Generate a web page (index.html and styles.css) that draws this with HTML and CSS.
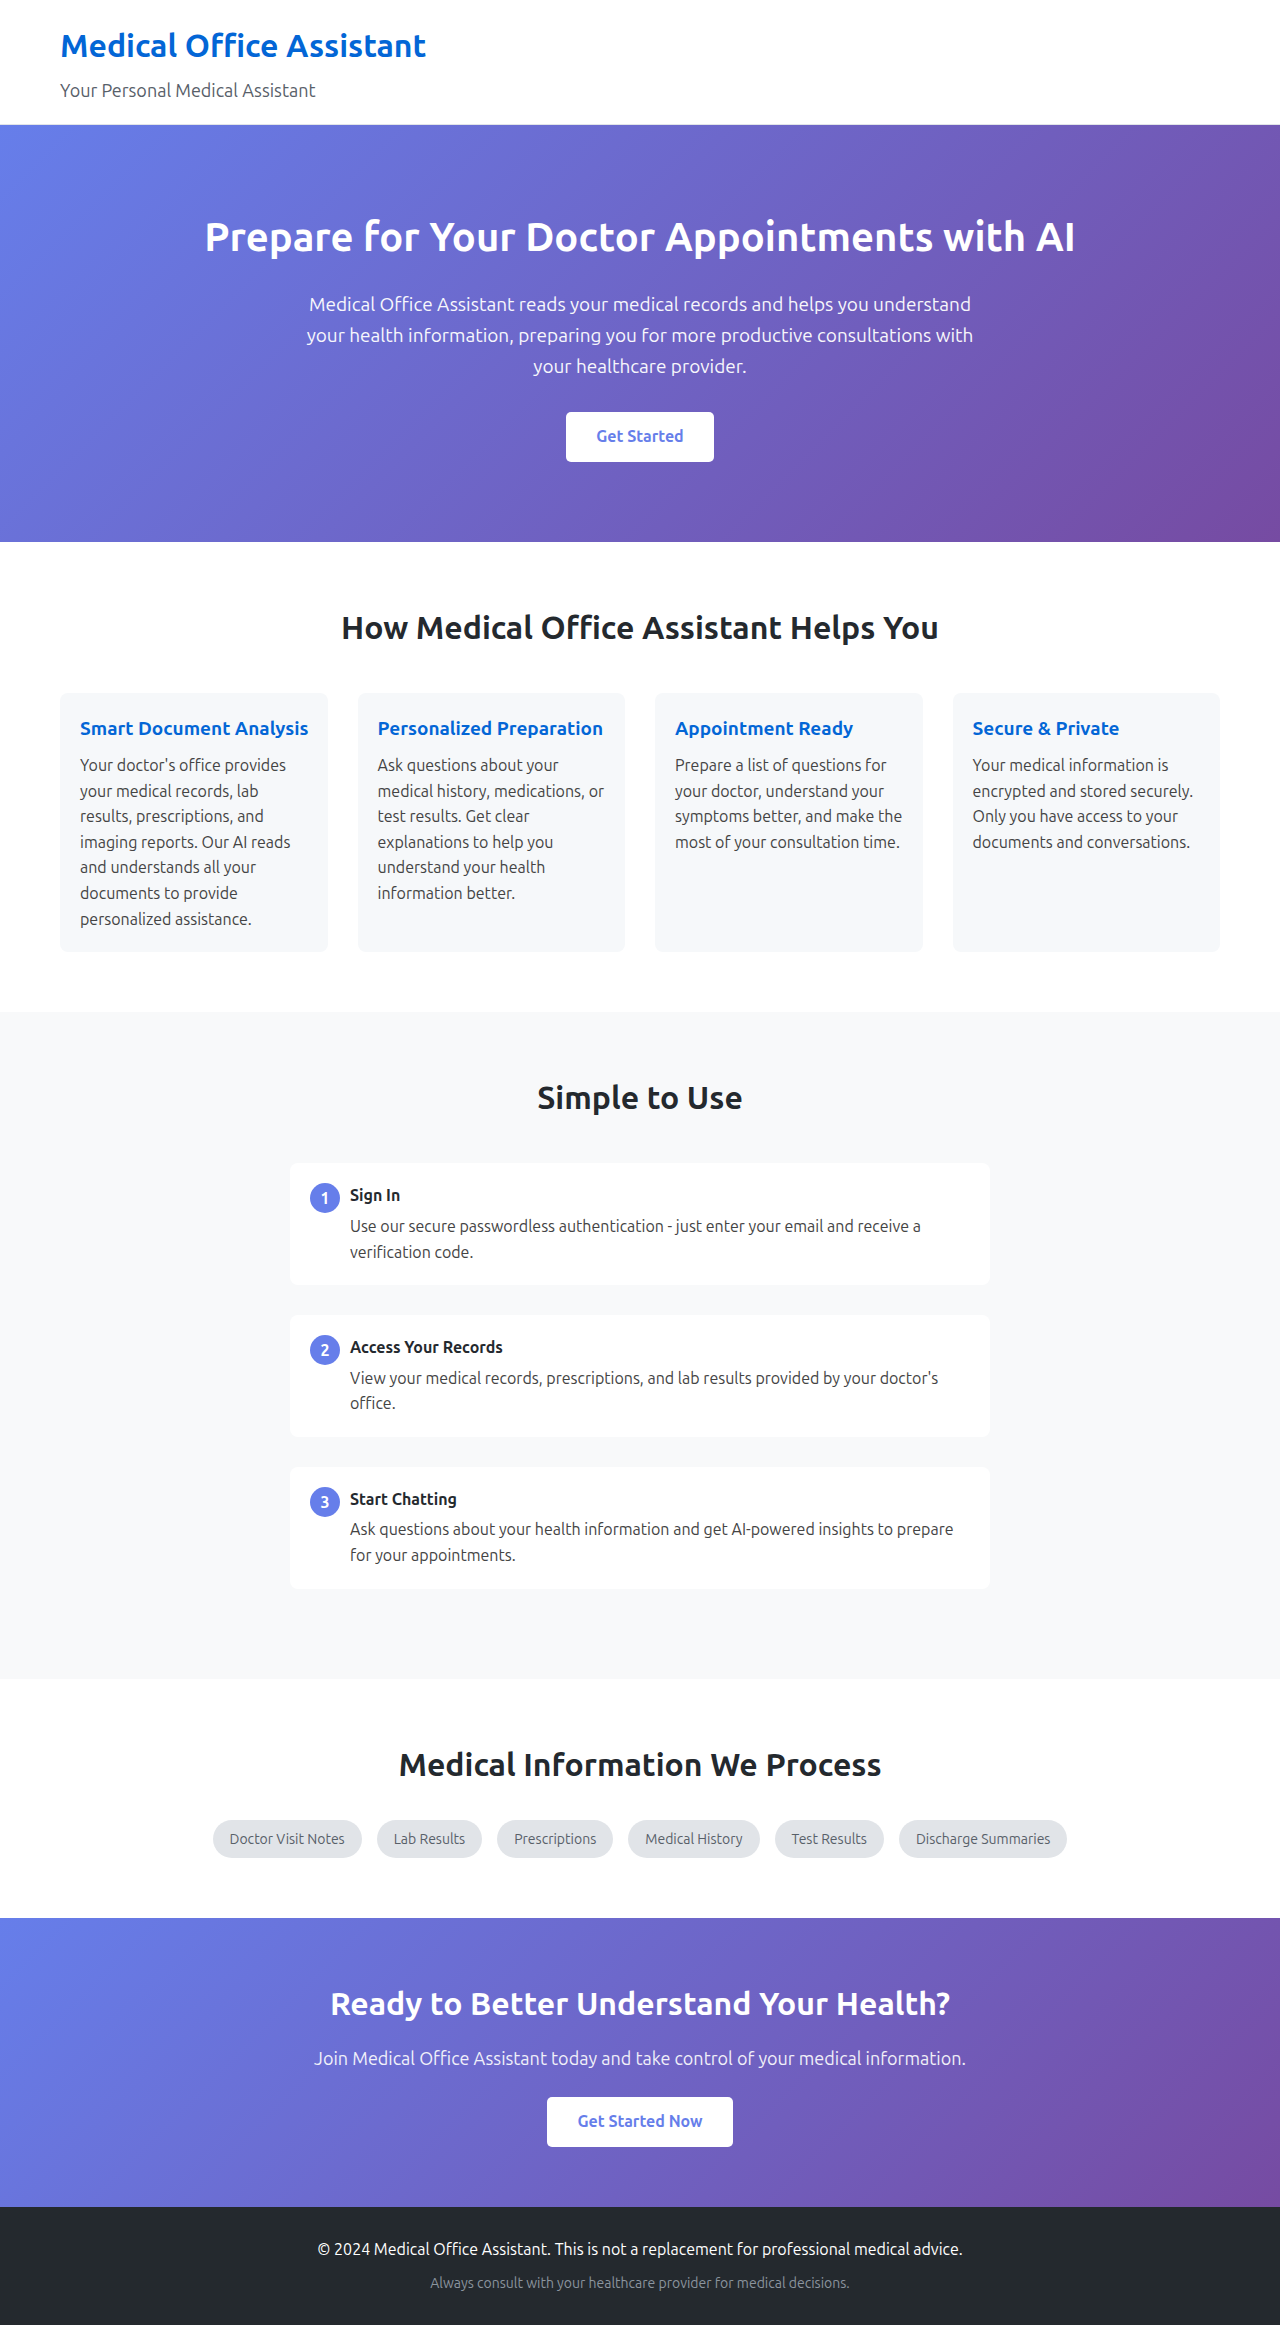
FILE: index.html
```html
<!DOCTYPE html>
<html lang="en">
<head>
  <meta charset="utf-8">
  <meta name="viewport" content="width=device-width, initial-scale=1">
  <title>Medical Office Assistant</title>
  <link rel="stylesheet" href="styles.css">
</head>
<body>
  <header class="site-header">
    <div class="container">
      <h1 class="brand">Medical Office Assistant</h1>
      <p class="tagline">Your Personal Medical Assistant</p>
    </div>
  </header>

  <main>
    <section class="hero">
      <div class="container">
        <h2 class="hero-title">Prepare for Your Doctor Appointments with AI</h2>
        <p class="hero-text">Medical Office Assistant reads your medical records and helps you understand your health information, preparing you for more productive consultations with your healthcare provider.</p>
        <a class="cta-button" href="#start">Get Started</a>
      </div>
    </section>

    <section class="section">
      <div class="container">
        <h2 class="section-title">How Medical Office Assistant Helps You</h2>
        <div class="feature-grid">
          <article class="feature">
            <h3 class="feature-title">Smart Document Analysis</h3>
            <p class="copy">Your doctor's office provides your medical records, lab results, prescriptions, and imaging reports. Our AI reads and understands all your documents to provide personalized assistance.</p>
          </article>
          <article class="feature">
            <h3 class="feature-title">Personalized Preparation</h3>
            <p class="copy">Ask questions about your medical history, medications, or test results. Get clear explanations to help you understand your health information better.</p>
          </article>
          <article class="feature">
            <h3 class="feature-title">Appointment Ready</h3>
            <p class="copy">Prepare a list of questions for your doctor, understand your symptoms better, and make the most of your consultation time.</p>
          </article>
          <article class="feature">
            <h3 class="feature-title">Secure &amp; Private</h3>
            <p class="copy">Your medical information is encrypted and stored securely. Only you have access to your documents and conversations.</p>
          </article>
        </div>
      </div>
    </section>

    <section class="section section-tinted">
      <div class="container">
        <h2 class="section-title">Simple to Use</h2>
        <ol class="steps">
          <li class="step">
            <span class="step-number">1</span>
            <div class="step-body">
              <h3 class="step-title">Sign In</h3>
              <p class="copy">Use our secure passwordless authentication - just enter your email and receive a verification code.</p>
            </div>
          </li>
          <li class="step">
            <span class="step-number">2</span>
            <div class="step-body">
              <h3 class="step-title">Access Your Records</h3>
              <p class="copy">View your medical records, prescriptions, and lab results provided by your doctor's office.</p>
            </div>
          </li>
          <li class="step">
            <span class="step-number">3</span>
            <div class="step-body">
              <h3 class="step-title">Start Chatting</h3>
              <p class="copy">Ask questions about your health information and get AI-powered insights to prepare for your appointments.</p>
            </div>
          </li>
        </ol>
      </div>
    </section>

    <section class="section">
      <div class="container">
        <h2 class="section-title section-title-close">Medical Information We Process</h2>
        <ul class="tags">
          <li class="tag">Doctor Visit Notes</li>
          <li class="tag">Lab Results</li>
          <li class="tag">Prescriptions</li>
          <li class="tag">Medical History</li>
          <li class="tag">Test Results</li>
          <li class="tag">Discharge Summaries</li>
        </ul>
      </div>
    </section>

    <section class="closing" id="start">
      <div class="container">
        <h2 class="closing-title">Ready to Better Understand Your Health?</h2>
        <p class="closing-text">Join Medical Office Assistant today and take control of your medical information.</p>
        <a class="cta-button" href="#start">Get Started Now</a>
      </div>
    </section>
  </main>

  <footer class="site-footer">
    <div class="container">
      <p>© 2024 Medical Office Assistant. This is not a replacement for professional medical advice.</p>
      <p class="disclaimer">Always consult with your healthcare provider for medical decisions.</p>
    </div>
  </footer>
</body>
</html>
```
FILE: styles.css
```css
* {
  margin: 0;
  padding: 0;
  box-sizing: border-box;
}

body {
  font-family: Ubuntu, "Open Sans", sans-serif;
  font-size: 16px;
  line-height: 1.6;
  color: #24292e;
  background: #fff;
}

h1, h2, h3 {
  font-weight: 600;
}

.container {
  max-width: 1200px;
  margin: 0 auto;
  padding: 0 20px;
}

/* Header */
.site-header {
  padding: 20px 0;
  border-bottom: 1px solid #e1e4e8;
}

.brand {
  margin-bottom: 5px;
  font-size: 32px;
  color: #0366d6;
}

.tagline {
  font-size: 18px;
  line-height: 28px;
  color: #586069;
}

/* Gradient bands */
.hero,
.closing {
  color: #fff;
  text-align: center;
  background: linear-gradient(135deg, #667eea 0%, #764ba2 100%);
}

.hero {
  padding: 80px 0;
}

.hero-title {
  margin-bottom: 20px;
  font-size: 40px;
}

.hero-text {
  max-width: 700px;
  margin: 0 auto 30px;
  font-size: 19px;
  line-height: 31px;
  opacity: 0.95;
}

.closing {
  padding: 60px 0;
}

.closing-title {
  margin-bottom: 15px;
  font-size: 32px;
}

.closing-text {
  margin-bottom: 25px;
  font-size: 18px;
  line-height: 28px;
  opacity: 0.9;
}

.cta-button {
  display: inline-block;
  padding: 12px 30px;
  border-radius: 5px;
  font-weight: 600;
  color: #667eea;
  text-decoration: none;
  vertical-align: top;
  background: #fff;
}

/* Sections */
.section {
  padding: 60px 0;
}

.section-tinted {
  background: #f8f9fa;
}

.section-title {
  margin-bottom: 40px;
  font-size: 32px;
  text-align: center;
}

.section-title-close {
  margin-bottom: 30px;
}

.copy {
  color: #444;
}

.feature-grid {
  display: grid;
  grid-template-columns: repeat(auto-fit, minmax(250px, 1fr));
  gap: 30px;
}

.feature {
  padding: 20px;
  border-radius: 8px;
  background: #f6f8fa;
}

.feature-title {
  margin-bottom: 10px;
  font-size: 19px;
  line-height: 30px;
  white-space: nowrap;
  color: #0366d6;
}

.steps {
  max-width: 700px;
  margin: 0 auto;
  list-style: none;
}

.step {
  display: flex;
  align-items: flex-start;
  gap: 10px;
  margin-bottom: 30px;
  padding: 20px;
  border-radius: 8px;
  background: #fff;
}

.step-number {
  flex: none;
  width: 30px;
  border-radius: 50%;
  font-weight: 600;
  line-height: 30px;
  color: #fff;
  text-align: center;
  background: #667eea;
}

.step-title {
  margin-bottom: 5px;
  font-size: 16px;
}

.tags {
  display: flex;
  flex-wrap: wrap;
  justify-content: center;
  gap: 15px;
  list-style: none;
}

.tag {
  padding: 8px 17px;
  border-radius: 20px;
  font-size: 14px;
  line-height: 22px;
  color: #586069;
  background: #e1e4e8;
}

/* Footer */
.site-footer {
  padding: 30px 0;
  color: #fff;
  text-align: center;
  background: #24292e;
}

.disclaimer {
  margin-top: 10px;
  font-size: 14px;
  line-height: 23px;
  color: #8b949e;
}
```
